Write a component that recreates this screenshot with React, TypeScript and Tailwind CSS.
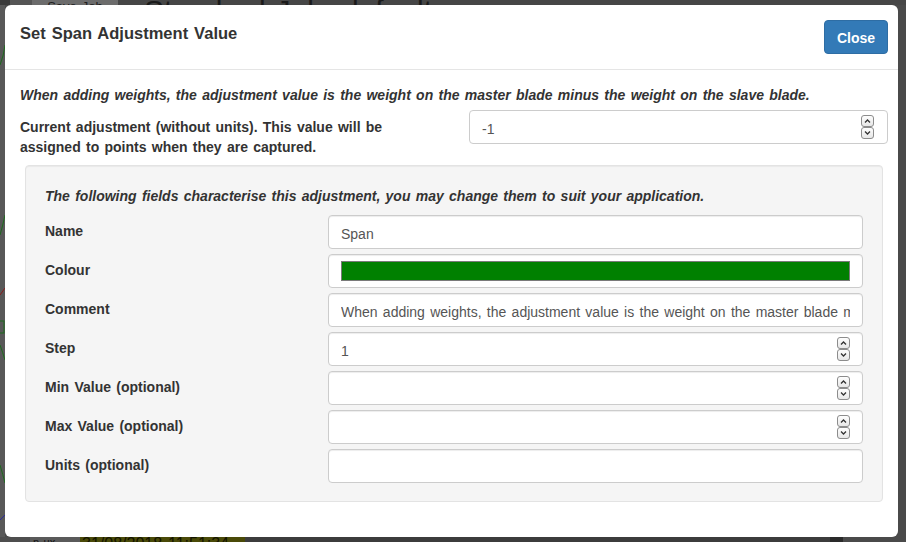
import React from 'react';

const font = { fontFamily: '"Liberation Sans", Arial, sans-serif' };

const Spinner = () => (
  <svg width="13" height="24" viewBox="0 0 13 24" className="shrink-0">
    <defs>
      <linearGradient id="spg" x1="0" y1="0" x2="0" y2="1">
        <stop offset="0" stopColor="#ffffff" />
        <stop offset="1" stopColor="#e6e6e6" />
      </linearGradient>
    </defs>
    <rect x="0.5" y="0.5" width="12" height="11" rx="2.5" fill="url(#spg)" stroke="#8c8c8c" />
    <rect x="0.5" y="12.5" width="12" height="11" rx="2.5" fill="url(#spg)" stroke="#8c8c8c" />
    <path d="M4 7.5 L6.5 5 L9 7.5" fill="none" stroke="#333" strokeWidth="1.3" />
    <path d="M4 16.5 L6.5 19 L9 16.5" fill="none" stroke="#333" strokeWidth="1.3" />
  </svg>
);

type Field = { label: string; value?: string; kind?: 'text' | 'number' | 'colour' };

const fields: Field[] = [
  { label: 'Name', value: 'Span' },
  { label: 'Colour', kind: 'colour' },
  {
    label: 'Comment',
    value: 'When adding weights, the adjustment value is the weight on the master blade minus the weight on the slave blade.',
  },
  { label: 'Step', value: '1', kind: 'number' },
  { label: 'Min Value (optional)', kind: 'number' },
  { label: 'Max Value (optional)', kind: 'number' },
  { label: 'Units (optional)' },
];

const Input = ({ field }: { field: Field }) => (
  <div className="h-[34px] w-full min-w-0 bg-white border border-[#cccccc] rounded-[4px] shadow-[inset_0_1px_1px_rgba(0,0,0,0.075)] flex items-center pl-[12px] pr-[12px] overflow-hidden">
    {field.kind === 'colour' ? (
      <div className="h-[20px] flex-1 bg-[#008000] border border-[#7a7a7a]" />
    ) : (
      <div className="flex-1 min-w-0 pt-[3px] text-[14px] text-[#555555] whitespace-nowrap overflow-hidden">{field.value}</div>
    )}
    {field.kind === 'number' && <Spinner />}
  </div>
);

export default function App() {
  return (
    <div className="w-[906px] h-[542px] overflow-hidden flex flex-col bg-[#4a4a4a] [word-spacing:1.4px]" style={font}>
      {/* page behind the overlay */}
      <div className="h-[5px] flex overflow-hidden shrink-0">
        <div className="w-[10px] bg-[#3a3a3a]" />
        <div className="w-[22px] bg-[#555555]" />
        <div className="w-[86px] bg-[#6c6c6c] flex justify-center items-end">
          <span className="text-[13px] leading-none text-[#1e1e1e] translate-y-[8px]">Save Job</span>
        </div>
        <div className="flex-1 bg-[#464646] pl-[26px] flex items-end">
          <span className="text-[30px] leading-none text-[#1a1a1a] translate-y-[21px]">Standard Job: default</span>
        </div>
      </div>

      <div className="flex h-[532px] shrink-0">
        <div className="w-[5px] bg-[#585858] overflow-hidden">
          <svg width="5" height="532">
            <path d="M0 60 Q4 50 5 40" stroke="#1c6b1c" fill="none" />
            <path d="M0 230 Q3 220 5 210" stroke="#1c6b1c" fill="none" />
            <path d="M0 290 L5 283" stroke="#8a1c1c" fill="none" />
            <rect x="-3" y="316" width="7" height="12" fill="none" stroke="#1c6b1c" />
            <path d="M0 340 Q3 348 5 355" stroke="#1c6b1c" fill="none" />
            <path d="M0 460 Q3 470 5 478" stroke="#1c6b1c" fill="none" />
            <path d="M0 515 L5 510" stroke="#2a2a9a" fill="none" />
          </svg>
        </div>

        {/* modal */}
        <div className="w-[893px] bg-white rounded-[6px] flex flex-col text-[#333333] text-[14px] leading-[20px]">
          <div className="flex justify-between items-start pl-[15px] pr-[10px] py-[15px] border-b border-[#e5e5e5]">
            <h4 className="text-[16.5px] font-bold leading-[26px] text-[#333333]">Set Span Adjustment Value</h4>
            <button className="h-[34px] w-[64px] pt-[1px] rounded-[4px] bg-[#337ab7] border border-[#2e6da4] text-white font-bold text-[14px] [word-spacing:0]">
              Close
            </button>
          </div>

          <div className="pt-[15px] pl-[15px] pr-[10px] pb-[15px]">
            <p className="font-bold italic mb-[5px]">
              When adding weights, the adjustment value is the weight on the master blade minus the weight on the slave blade.
            </p>
            <div className="flex">
              <div className="w-[449px] pr-[15px] pt-[7px] font-bold">
                <div className="w-[410px]">
                  Current adjustment (without units). This value will be assigned to points when they are captured.
                </div>
              </div>
              <div className="flex-1 min-w-0">
                <div className="h-[34px] w-full bg-white border border-[#cccccc] rounded-[4px] flex items-center pl-[12px] pr-[13px]">
                  <div className="flex-1 pt-[3px] text-[#555555]">-1</div>
                  <Spinner />
                </div>
              </div>
            </div>

            <div className="mt-[8px] mx-[5px] bg-[#f5f5f5] border border-[#e3e3e3] rounded-[4px] pt-[20px] pb-[18px] px-[19px] shadow-[inset_0_1px_1px_rgba(0,0,0,0.05)]">
              <p className="font-bold italic mb-[9px]">
                The following fields characterise this adjustment, you may change them to suit your application.
              </p>
              <div className="flex flex-col gap-[5px]">
                {fields.map((f) => (
                  <div key={f.label} className="flex">
                    <div className="w-[283px] shrink-0 pt-[6px] font-bold">{f.label}</div>
                    <div className="flex-1 min-w-0">
                      <Input field={f} />
                    </div>
                  </div>
                ))}
              </div>
            </div>
          </div>
        </div>

        <div className="flex-1 bg-[#4a4a4a]" />
      </div>

      <div className="h-[5px] flex overflow-hidden shrink-0">
        <div className="w-[30px] bg-[#4e4e4e]" />
        <div className="w-[50px] bg-[#5a5a5a] flex items-end pl-[3px]">
          <span className="text-[11px] leading-none text-[#111] translate-y-[6px]">n ux</span>
        </div>
        <div className="w-[165px] bg-[#4a4a08] flex items-end pl-[2px]">
          <span className="text-[16px] leading-none text-[#141400] translate-y-[10px]">31/08/2018 11:51:34</span>
        </div>
        <div className="w-[585px] bg-[#3c3c3c]" />
        <div className="w-[13px] bg-[#2a2a2a]" />
        <div className="flex-1 bg-[#4a4a4a]" />
      </div>
    </div>
  );
}
